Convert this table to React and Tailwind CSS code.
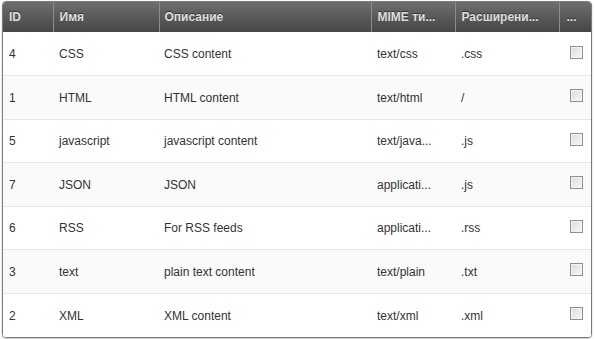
const rows = [
  { id: "4", name: "CSS", desc: "CSS content", mime: "text/css", ext: ".css" },
  { id: "1", name: "HTML", desc: "HTML content", mime: "text/html", ext: "/" },
  { id: "5", name: "javascript", desc: "javascript content", mime: "text/java...", ext: ".js" },
  { id: "7", name: "JSON", desc: "JSON", mime: "applicati...", ext: ".js" },
  { id: "6", name: "RSS", desc: "For RSS feeds", mime: "applicati...", ext: ".rss" },
  { id: "3", name: "text", desc: "plain text content", mime: "text/plain", ext: ".txt" },
  { id: "2", name: "XML", desc: "XML content", mime: "text/xml", ext: ".xml" },
];

function Checkbox() {
  return (
    <span className="inline-block w-[13px] h-[13px] border border-[#8f8f8f] bg-gradient-to-br from-[#dcdcdc] to-[#f7f7f7] shadow-[inset_0_0_0_1px_#f4f4f4]"></span>
  );
}

export default function App() {
  const th = "text-left font-bold text-[12px] text-[#dedede] [text-shadow:0_-1px_0_#333] px-[6px] whitespace-nowrap overflow-hidden";
  return (
    <div className="min-h-screen bg-white pt-[1px] pl-[2px] font-['Liberation_Sans',Arial,sans-serif]">
      <div className="w-[590px] border border-[#7a7a7a] rounded-[4px] overflow-hidden shadow-[0_1px_2px_rgba(0,0,0,0.25)]">
        <table className="w-full table-fixed border-collapse">
          <colgroup>
            <col className="w-[50px]" />
            <col className="w-[106px]" />
            <col className="w-[212px]" />
            <col className="w-[84px]" />
            <col className="w-[104px]" />
            <col className="w-[32px]" />
          </colgroup>
          <thead>
            <tr className="h-[30px] bg-gradient-to-b from-[#6e6e6e] to-[#464646]">
              <th className={th}>ID</th>
              <th className={th + " border-l border-[#8c8c8c]"}>Имя</th>
              <th className={th + " border-l border-[#8c8c8c] pl-[5px]"}>Описание</th>
              <th className={th + " border-l border-[#8c8c8c]"}>MIME ти...</th>
              <th className={th + " border-l border-[#8c8c8c]"}>Расширени...</th>
              <th className={th + " border-l border-[#8c8c8c] pl-[7px]"}>...</th>
            </tr>
          </thead>
          <tbody>
            {rows.map((r, i) => (
              <tr
                key={r.id}
                className={
                  "h-[43.5px] text-[12px] text-[#333] " +
                  (i % 2 === 1 ? "bg-[#fafafa] " : "bg-white ") +
                  (i < rows.length - 1 ? "border-b border-[#e6e6e6]" : "")
                }
              >
                <td className="px-[6px] pt-[1px]">{r.id}</td>
                <td className="px-[6px] pt-[1px]">{r.name}</td>
                <td className="px-[5px] pt-[1px]">{r.desc}</td>
                <td className="px-[6px] pt-[1px] whitespace-nowrap overflow-hidden">{r.mime}</td>
                <td className="px-[6px] pt-[1px]">{r.ext}</td>
                <td className="pl-[11px]">
                  <div className="flex items-center h-[13px] -mt-[3px]">
                    <Checkbox />
                  </div>
                </td>
              </tr>
            ))}
          </tbody>
        </table>
      </div>
    </div>
  );
}
